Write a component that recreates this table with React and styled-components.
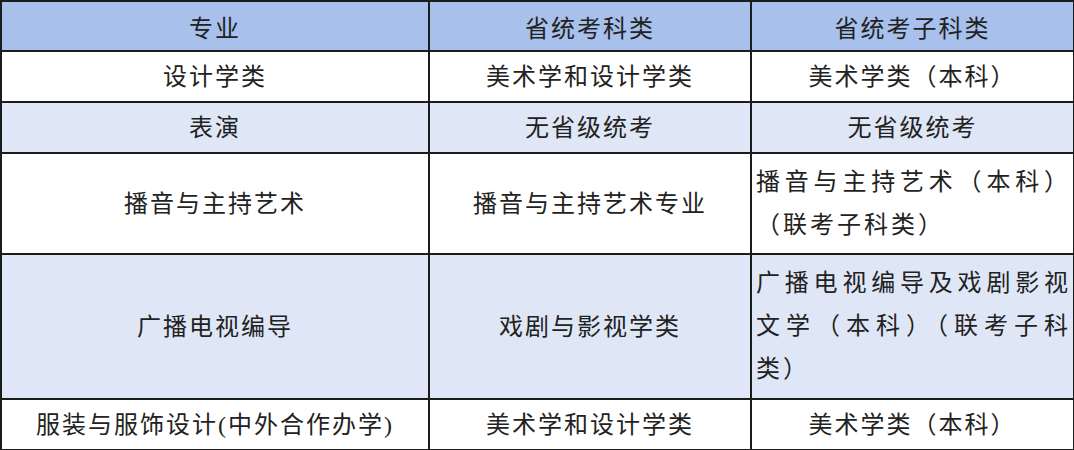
import React from "react";
import styled, { createGlobalStyle } from "styled-components";

const GlobalStyle = createGlobalStyle`
  html, body {
    margin: 0;
    padding: 0;
    background: #ffffff;
  }
  body {
    font-family: "Liberation Serif", "Noto Sans CJK SC", serif;
    color: #222;
  }
`;

const rows = [
  { major: "设计学类", exam: "美术学和设计学类", sub: "美术学类（本科）", tone: "white", h: 51 },
  { major: "表演", exam: "无省级统考", sub: "无省级统考", tone: "light", h: 51 },
  { major: "播音与主持艺术", exam: "播音与主持艺术专业", sub: "播音与主持艺术（本科）（联考子科类）", tone: "white", h: 101, wrap: true },
  { major: "广播电视编导", exam: "戏剧与影视学类", sub: "广播电视编导及戏剧影视文学（本科）（联考子科类）", tone: "light", h: 145, wrap: true },
  { major: "服装与服饰设计(中外合作办学)", exam: "美术学和设计学类", sub: "美术学类（本科）", tone: "white", h: 51 },
];

const bg = {
  head: "#a8c0ec",
  light: "#dfe7f7",
  white: "#ffffff",
};

export default function App() {
  return (
    <>
      <GlobalStyle />
      <Table>
        <colgroup>
          <col style={{ width: 428 }} />
          <col style={{ width: 322 }} />
          <col style={{ width: 323 }} />
        </colgroup>
        <thead>
          <Row $tone="head" $h={50}>
            <Head>专业</Head>
            <Head>省统考科类</Head>
            <Head>省统考子科类</Head>
          </Row>
        </thead>
        <tbody>
          {rows.map((r) => (
            <Row key={r.major} $tone={r.tone} $h={r.h}>
              <Cell>{r.major}</Cell>
              <Cell>{r.exam}</Cell>
              <Cell $wrap={r.wrap}>{r.sub}</Cell>
            </Row>
          ))}
        </tbody>
      </Table>
    </>
  );
}

const Table = styled.table`
  width: 1073px;
  border-collapse: collapse;
  table-layout: fixed;
  border: 2px solid #1c1c1c;
`;

const Row = styled.tr`
  height: ${(p) => p.$h}px;
  background: ${(p) => bg[p.$tone]};
`;

const Head = styled.th`
  border: 2px solid #1c1c1c;
  font-weight: 400;
  font-size: 24px;
  letter-spacing: 2px;
  text-align: center;
  vertical-align: middle;
  padding: 0 4px;
  color: #222;
`;

const Cell = styled.td`
  border: 2px solid #1c1c1c;
  font-size: 24px;
  line-height: ${(p) => (p.$wrap ? "43px" : "36px")};
  letter-spacing: ${(p) => (p.$wrap ? "3px" : "2px")};
  text-align: ${(p) => (p.$wrap ? "justify" : "center")};
  text-align-last: ${(p) => (p.$wrap ? "left" : "center")};
  vertical-align: middle;
  padding: ${(p) => (p.$wrap ? "0 2px 0 4px" : "0 4px")};
  color: #222;
`;
